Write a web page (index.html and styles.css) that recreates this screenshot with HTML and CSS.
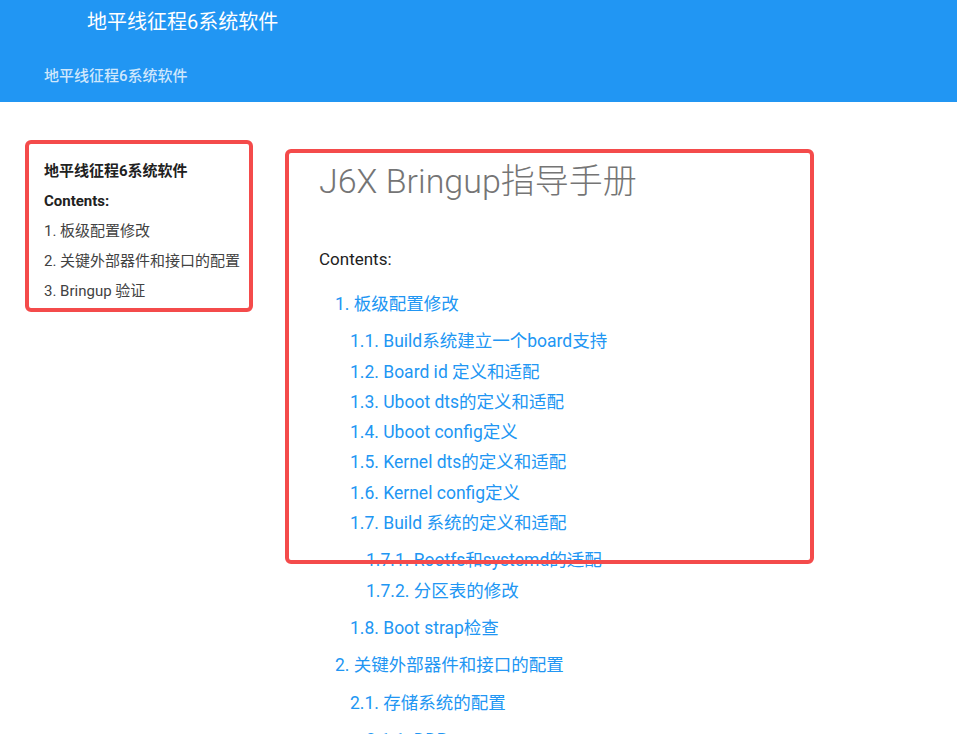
FILE: index.html
```html
<!DOCTYPE html>
<html lang="zh-CN">
<head>
<meta charset="utf-8">
<title>J6X Bringup指导手册</title>
<link rel="stylesheet" href="styles.css">
</head>
<body>
<header class="topbar">
  <div class="brand">地平线征程6系统软件</div>
  <div class="subtitle">地平线征程6系统软件</div>
</header>
<div class="page">
  <aside class="sidebar">
    <div class="side-title">地平线征程6系统软件</div>
    <div class="side-caption">Contents:</div>
    <ul class="side-list">
      <li>1. 板级配置修改</li>
      <li>2. 关键外部器件和接口的配置</li>
      <li>3. Bringup 验证</li>
    </ul>
  </aside>
  <main class="main">
    <h1 class="doc-title">J6X Bringup指导手册</h1>
    <div class="caption">Contents:</div>
    <ul class="toc lvl1">
      <li><a href="#">1. 板级配置修改</a>
        <ul class="toc lvl2">
          <li><a href="#">1.1. Build系统建立一个board支持</a></li>
          <li><a href="#">1.2. Board id 定义和适配</a></li>
          <li><a href="#">1.3. Uboot dts的定义和适配</a></li>
          <li><a href="#">1.4. Uboot config定义</a></li>
          <li><a href="#">1.5. Kernel dts的定义和适配</a></li>
          <li><a href="#">1.6. Kernel config定义</a></li>
          <li><a href="#">1.7. Build 系统的定义和适配</a>
            <ul class="toc lvl3">
              <li><a href="#">1.7.1. Rootfs和systemd的适配</a></li>
              <li><a href="#">1.7.2. 分区表的修改</a></li>
            </ul>
          </li>
          <li><a href="#">1.8. Boot strap检查</a></li>
        </ul>
      </li>
      <li><a href="#">2. 关键外部器件和接口的配置</a>
        <ul class="toc lvl2">
          <li><a href="#">2.1. 存储系统的配置</a>
            <ul class="toc lvl3">
              <li><a href="#">2.1.1. DDR</a></li>
            </ul>
          </li>
        </ul>
      </li>
    </ul>
  </main>
  <div class="mark mark-side"></div>
  <div class="mark mark-main"></div>
</div>
</body>
</html>
```
FILE: styles.css
```css
html, body {
  margin: 0;
  padding: 0;
  background: #ffffff;
  font-family: Roboto, "Noto Sans CJK SC", sans-serif;
  overflow: hidden;
}

.topbar {
  background: #2196f3;
  height: 102px;
  box-sizing: border-box;
  padding: 8px 44px 0;
  display: flex;
  flex-direction: column;
}

.brand {
  margin-left: 43px;
  font-size: 20px;
  line-height: 28px;
  color: #ffffff;
  font-weight: 400;
}

.subtitle {
  margin-top: 30px;
  font-size: 15px;
  line-height: 20px;
  color: rgba(255, 255, 255, 0.78);
  font-weight: 500;
}

.page {
  position: relative;
  display: flex;
  padding-left: 44px;
}

.sidebar {
  width: 275px;
  flex: none;
  padding-top: 54px;
  font-size: 15px;
  line-height: 30px;
  color: #424242;
}

.side-title,
.side-caption {
  font-weight: 700;
  color: #212121;
}

.side-list {
  list-style: none;
  margin: 0;
  padding: 0;
}

.main {
  flex: 1;
  padding-top: 57px;
}

.doc-title {
  margin: 0;
  font-size: 34px;
  line-height: 44px;
  font-weight: 300;
  color: #757575;
}

.caption {
  margin-top: 41px;
  font-size: 17px;
  line-height: 30px;
  color: #212121;
}

.toc {
  list-style: none;
  margin: 0;
  font-size: 17.5px;
  line-height: 30.3px;
}

.toc.lvl1 {
  margin-top: 15px;
  padding-left: 16px;
}

.toc.lvl2 {
  margin: 7px 0;
  padding-left: 15px;
}

.toc.lvl3 {
  margin: 7px 0;
  padding-left: 16px;
}

.toc a {
  color: #2196f3;
  text-decoration: none;
}

.mark {
  position: absolute;
  border: 4px solid #f44b4b;
  border-radius: 6px;
  box-sizing: border-box;
  pointer-events: none;
}

.mark-side {
  left: 25px;
  top: 38px;
  width: 228px;
  height: 172px;
}

.mark-main {
  left: 285px;
  top: 47px;
  width: 529px;
  height: 415px;
}
```
